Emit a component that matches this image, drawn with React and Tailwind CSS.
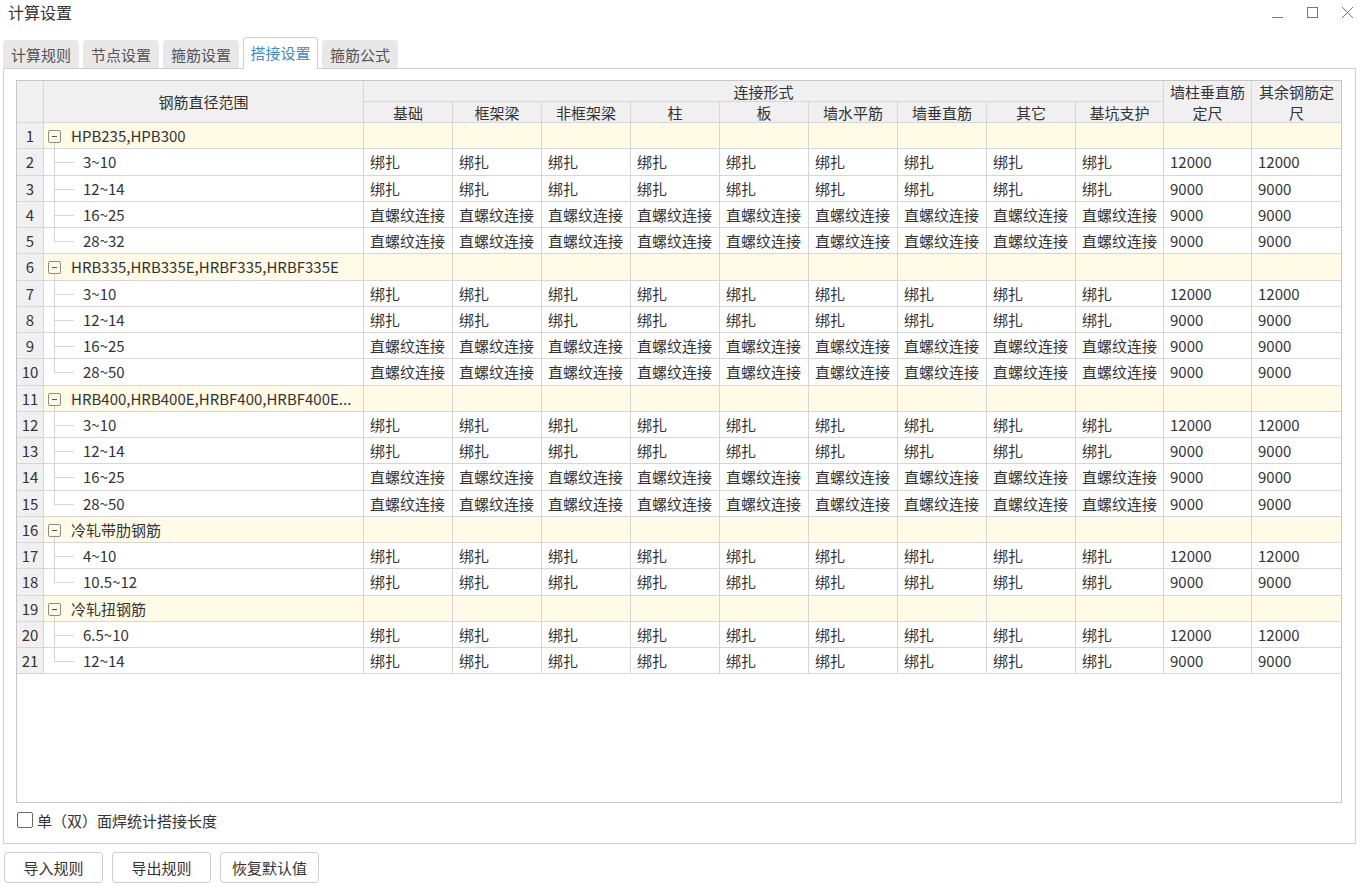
import React from "react";

const cols =
  "grid grid-cols-[27px_320px_89px_89px_89px_89px_89px_89px_89px_89px_88px_88px_89px]";

const groups = [
  {
    name: "HPB235,HPB300",
    items: [
      ["3~10", "绑扎", "12000"],
      ["12~14", "绑扎", "9000"],
      ["16~25", "直螺纹连接", "9000"],
      ["28~32", "直螺纹连接", "9000"],
    ],
  },
  {
    name: "HRB335,HRB335E,HRBF335,HRBF335E",
    items: [
      ["3~10", "绑扎", "12000"],
      ["12~14", "绑扎", "9000"],
      ["16~25", "直螺纹连接", "9000"],
      ["28~50", "直螺纹连接", "9000"],
    ],
  },
  {
    name: "HRB400,HRB400E,HRBF400,HRBF400E...",
    items: [
      ["3~10", "绑扎", "12000"],
      ["12~14", "绑扎", "9000"],
      ["16~25", "直螺纹连接", "9000"],
      ["28~50", "直螺纹连接", "9000"],
    ],
  },
  {
    name: "冷轧带肋钢筋",
    items: [
      ["4~10", "绑扎", "12000"],
      ["10.5~12", "绑扎", "9000"],
    ],
  },
  {
    name: "冷轧扭钢筋",
    items: [
      ["6.5~10", "绑扎", "12000"],
      ["12~14", "绑扎", "9000"],
    ],
  },
];

const tabs = ["计算规则", "节点设置", "箍筋设置", "搭接设置", "箍筋公式"];
const subHeads = ["基础", "框架梁", "非框架梁", "柱", "板", "墙水平筋", "墙垂直筋", "其它", "基坑支护"];

function NumCell({ n }) {
  return (
    <div className="flex items-center justify-center border-r border-b border-[#d6d6d6] bg-[#f0f0f0]">
      {n}
    </div>
  );
}

function GroupRow({ n, name }) {
  return (
    <div className={`${cols} h-[26.25px] bg-[#fffbe6]`}>
      <NumCell n={n} />
      <div className="relative flex items-center border-r border-b border-[#d6d6d6] pl-[27px]">
        <span className="absolute left-[4px] top-[7px] flex h-[13px] w-[13px] items-center justify-center rounded-[2px] border border-[#8c8c8c]">
          <span className="h-px w-[5px] bg-[#555]" />
        </span>
        <span className="absolute left-[10px] top-[20px] -bottom-px w-px bg-[#d4d4d4]" />
        {name}
      </div>
      {Array.from({ length: 11 }).map((_, i) => (
        <div key={i} className={`border-b border-[#d6d6d6] ${i < 10 ? "border-r" : ""}`} />
      ))}
    </div>
  );
}

function ItemRow({ n, item, last }) {
  const [range, kind, len] = item;
  return (
    <div className={`${cols} h-[26.25px] bg-white`}>
      <NumCell n={n} />
      <div className="relative flex items-center border-r border-b border-[#d6d6d6] pl-[39px]">
        <span
          className={`absolute left-[10px] top-[-1px] w-px bg-[#d4d4d4] ${last ? "h-[14px]" : "-bottom-px"}`}
        />
        <span className="absolute left-[10px] top-[13px] h-px w-[20px] bg-[#d4d4d4]" />
        {range}
      </div>
      {Array.from({ length: 9 }).map((_, i) => (
        <div key={i} className="flex items-center border-r border-b border-[#d6d6d6] pl-[6px] whitespace-nowrap">
          {kind}
        </div>
      ))}
      <div className="flex items-center border-r border-b border-[#d6d6d6] pl-[6px]">{len}</div>
      <div className="flex items-center border-b border-[#d6d6d6] pl-[6px]">{len}</div>
    </div>
  );
}

export default function App() {
  let n = 0;
  const rows = [];
  groups.forEach((g, gi) => {
    n += 1;
    rows.push(<GroupRow key={`g${gi}`} n={n} name={g.name} />);
    g.items.forEach((it, ii) => {
      n += 1;
      rows.push(<ItemRow key={`i${gi}-${ii}`} n={n} item={it} last={ii === g.items.length - 1} />);
    });
  });

  return (
    <div className="h-[887px] w-[1360px] overflow-hidden bg-white font-['Noto_Sans_CJK_SC',sans-serif] text-[15px] leading-none text-[#333]">
      {/* title bar */}
      <div className="flex h-[24px] items-center justify-between pl-[8px] pr-[6px]">
        <span className="text-[16px] text-[#333]">计算设置</span>
        <div className="mt-[2px] flex items-center gap-[22px] text-[#777]">
          <svg width="13" height="14" viewBox="0 0 13 14">
            <line x1="1" y1="11.5" x2="12" y2="11.5" stroke="#777" strokeWidth="1" />
          </svg>
          <svg width="13" height="14" viewBox="0 0 13 14">
            <rect x="1.5" y="1.5" width="10" height="10" fill="none" stroke="#777" strokeWidth="1" />
          </svg>
          <svg width="13" height="14" viewBox="0 0 13 14">
            <path d="M1 1 L12 12 M12 1 L1 12" stroke="#777" strokeWidth="1" fill="none" />
          </svg>
        </div>
      </div>

      {/* tabs */}
      <div className="relative z-10 -mb-px flex h-[45px] items-end gap-[4px] pl-[3px]">
        {tabs.map((t, i) =>
          i === 3 ? (
            <div
              key={t}
              className="flex h-[32px] w-[75px] items-center justify-center rounded-t-[4px] border border-b-0 border-[#cfcfcf] bg-white pb-[2px] text-[#3c8ad8]"
            >
              {t}
            </div>
          ) : (
            <div
              key={t}
              className="mb-px flex h-[28px] w-[76px] items-center justify-center rounded-t-[4px] bg-[#e8e8e8] text-[#555]"
            >
              {t}
            </div>
          )
        )}
      </div>

      {/* panel */}
      <div className="ml-[3px] h-[776px] w-[1353px] border border-[#cfcfcf] pl-[12px] pt-[11px]">
        <div className="h-[723px] w-[1326px] border border-[#c6c6c6]">
          {/* header */}
          <div className={`${cols} grid-rows-[21px_21px] bg-[#f0f0f0]`}>
            <div className="row-span-2 border-r border-b border-[#d6d6d6]" />
            <div className="row-span-2 flex items-center justify-center border-r border-b border-[#d6d6d6]">
              钢筋直径范围
            </div>
            <div className="col-span-9 flex items-center justify-center border-r border-b border-[#d6d6d6]">
              连接形式
            </div>
            <div className="row-span-2 flex flex-col items-center justify-center gap-[6px] border-r border-b border-[#d6d6d6]">
              <span>墙柱垂直筋</span>
              <span>定尺</span>
            </div>
            <div className="row-span-2 flex flex-col items-center justify-center gap-[6px] border-b border-[#d6d6d6]">
              <span>其余钢筋定</span>
              <span>尺</span>
            </div>
            {subHeads.map((h) => (
              <div key={h} className="flex items-center justify-center border-r border-b border-[#d6d6d6]">
                {h}
              </div>
            ))}
          </div>
          {rows}
        </div>

        <label className="ml-[1px] mt-[9px] flex h-[16px] items-center gap-[4px]">
          <span className="h-[16px] w-[16px] rounded-[2px] border border-[#666] bg-white" />
          <span>单（双）面焊统计搭接长度</span>
        </label>
      </div>

      {/* buttons */}
      <div className="mt-[8px] flex gap-[9px] pl-[4px]">
        {["导入规则", "导出规则", "恢复默认值"].map((b) => (
          <button
            key={b}
            className="flex h-[31px] w-[99px] items-center justify-center rounded-[3px] border border-[#cfcfcf] bg-white text-[#333]"
          >
            {b}
          </button>
        ))}
      </div>
    </div>
  );
}
